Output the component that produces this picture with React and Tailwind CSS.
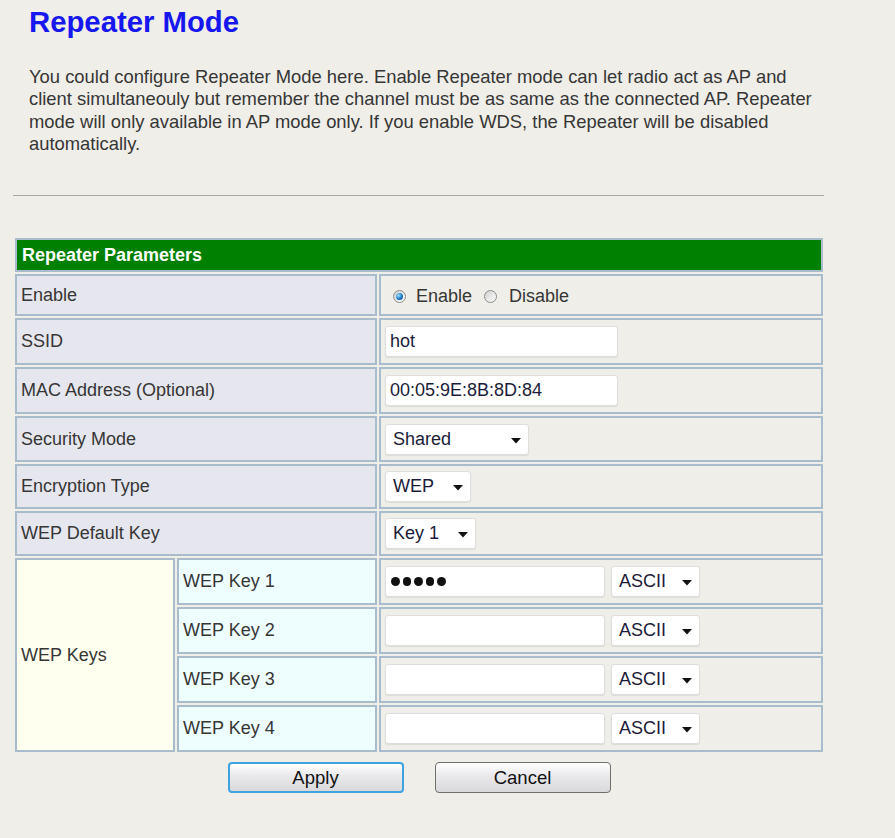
import React from 'react';

const font = { fontFamily: '"Liberation Sans", Arial, sans-serif' };

function Select({ value, width }) {
  return (
    <div className={`relative inline-flex h-[31px] items-center rounded-[3px] border border-[#dedede] bg-white pl-[7px] text-[18px] text-[#1c1c3a] shadow-[0_1px_1px_rgba(0,0,0,0.08)] ${width}`}>
      <span>{value}</span>
      <svg className="absolute right-[7px] top-[13px]" width="10" height="6" viewBox="0 0 10 6">
        <path d="M0 0 L10 0 L5 5.5 Z" fill="#111" />
      </svg>
    </div>
  );
}

function TextBox({ value = '', width, dots }) {
  return (
    <div className={`inline-flex h-[31px] items-center rounded-[3px] border border-[#dedede] bg-white pl-[4px] text-[18px] text-[#1c1c3a] shadow-[0_1px_1px_rgba(0,0,0,0.08)] ${width}`}>
      {dots ? (
        <span className="flex gap-[3px] pl-[1px]">
          {[0, 1, 2, 3, 4].map(i => <span key={i} className="block h-[8.5px] w-[8.5px] rounded-full bg-[#111]" />)}
        </span>
      ) : value}
    </div>
  );
}

function Radio({ checked }) {
  return (
    <span className="inline-flex h-[13px] w-[13px] items-center justify-center rounded-full border border-[#8c8c8c] bg-[linear-gradient(135deg,#cfcfcf,#ffffff)]">
      {checked && <span className="block h-[7px] w-[7px] rounded-full bg-[radial-gradient(circle_at_35%_35%,#9fe0ff,#1a78c8_55%,#0b3f7a)]" />}
    </span>
  );
}

const labelCell = 'border-2 border-[#a9bccb] bg-[#e6e6ee] pl-[4px] align-middle text-[18px] text-[#363636]';
const valueCell = 'border-2 border-[#a9bccb] bg-[#efeee8] pl-[4px] align-middle';

export default function App() {
  const rows = [
    { label: 'SSID', h: 'h-[47px]', content: <TextBox value="hot" width="w-[233px]" /> },
    { label: 'MAC Address (Optional)', h: 'h-[47px]', content: <TextBox value="00:05:9E:8B:8D:84" width="w-[233px]" /> },
    { label: 'Security Mode', h: 'h-[46px]', content: <Select value="Shared" width="w-[144px]" /> },
    { label: 'Encryption Type', h: 'h-[45px]', content: <Select value="WEP" width="w-[86px]" /> },
    { label: 'WEP Default Key', h: 'h-[45px]', content: <Select value="Key 1" width="w-[91px]" /> },
  ];
  const keys = ['WEP Key 1', 'WEP Key 2', 'WEP Key 3', 'WEP Key 4'];

  return (
    <div className="min-h-[838px] w-full bg-[#efeee8] pl-[13px]" style={font}>
      <h1 className="pl-[16px] pt-[4px] text-[29.3px] font-bold leading-[35px] text-[#1616ee]">Repeater Mode</h1>
      <p className="mt-[27px] w-[830px] pl-[16px] text-[18.4px] leading-[22.3px] text-[#363636]">
        <span className="whitespace-nowrap">You could configure Repeater Mode here. Enable Repeater mode can let radio act as AP and</span><br />
        <span className="whitespace-nowrap">client simultaneouly but remember the channel must be as same as the connected AP. Repeater</span><br />
        <span className="whitespace-nowrap">mode will only available in AP mode only. If you enable WDS, the Repeater will be disabled</span><br />
        automatically.
      </p>
      <div className="mt-[40px] w-[811px] border-t border-[#a8a8a8]" />

      <table className="mt-[40px] w-[812px] table-fixed border-separate border-spacing-[2px]">
        <colgroup>
          <col className="w-[160px]" />
          <col className="w-[200px]" />
          <col className="w-[444px]" />
        </colgroup>
        <tbody>
          <tr className="h-[34px]">
            <td colSpan={3} className="border-2 border-[#a9bccb] bg-[#008000] pl-[5px] align-middle text-[18px] font-bold text-white">
              Repeater Parameters
            </td>
          </tr>
          <tr className="h-[42px]">
            <td colSpan={2} className={labelCell}>Enable</td>
            <td className={valueCell}>
              <div className="flex items-center pl-[8px] pt-[2px] text-[18px] text-[#363636]">
                <Radio checked />
                <span className="ml-[10px]">Enable</span>
                <span className="ml-[12px] inline-flex"><Radio /></span>
                <span className="ml-[12px]">Disable</span>
              </div>
            </td>
          </tr>
          {rows.map(r => (
            <tr key={r.label} className={r.h}>
              <td colSpan={2} className={labelCell}>{r.label}</td>
              <td className={valueCell}>{r.content}</td>
            </tr>
          ))}
          {keys.map((k, i) => (
            <tr key={k} className="h-[47px]">
              {i === 0 && (
                <td rowSpan={4} className="border-2 border-[#a9bccb] bg-[#fffff0] pl-[4px] align-middle text-[18px] text-[#363636]">
                  WEP Keys
                </td>
              )}
              <td className="border-2 border-[#a9bccb] bg-[#eefeff] pl-[4px] align-middle text-[18px] text-[#363636]">{k}</td>
              <td className={valueCell}>
                <div className="flex items-center gap-[6px]">
                  <TextBox width="w-[220px]" dots={i === 0} />
                  <Select value="ASCII" width="w-[89px]" />
                </div>
              </td>
            </tr>
          ))}
        </tbody>
      </table>

      <div className="mt-[8px] flex w-[812px] justify-center gap-[31px]">
        <button className="h-[31px] w-[176px] rounded-[4px] border-2 border-[#3fa3e0] bg-[linear-gradient(#ffffff,#e9e9ec_45%,#d9d9dc)] text-[18.5px] text-[#111]">
          Apply
        </button>
        <button className="h-[31px] w-[176px] rounded-[4px] border border-[#6f6f6f] bg-[linear-gradient(#ffffff,#e9e9ec_45%,#d9d9dc)] text-[18.5px] text-[#111]">
          Cancel
        </button>
      </div>
    </div>
  );
}
